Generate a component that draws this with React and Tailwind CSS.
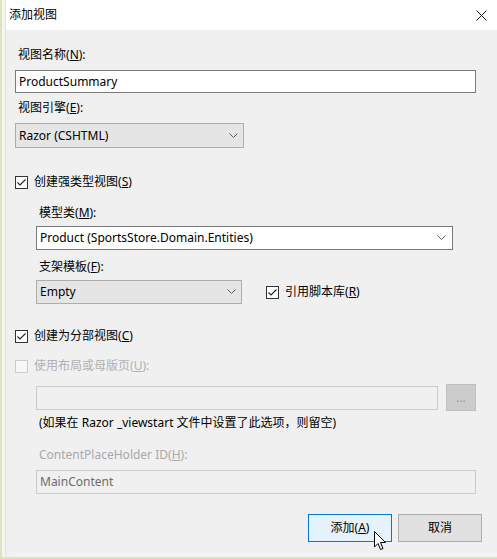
import React from "react"

const font = {
  fontFamily: '"Segoe UI", "Noto Sans", "Noto Sans CJK SC", sans-serif',
}

function Chevron({ color = "#606060" }) {
  return (
    <svg width="9" height="6" viewBox="0 0 9 6" className="shrink-0">
      <path d="M0.5 0.5 L4.5 4.5 L8.5 0.5" fill="none" stroke={color} strokeWidth="1" />
    </svg>
  )
}

function CheckBox({ checked, disabled }) {
  return (
    <div
      className={`flex h-[13px] w-[13px] shrink-0 items-center justify-center border ${
        disabled ? "border-[#cccccc] bg-[#f7f7f7]" : "border-[#333333] bg-white"
      }`}
    >
      {checked && (
        <svg width="11" height="11" viewBox="0 0 11 11">
          <path d="M1.5 5.5 L4 8 L9.5 2.5" fill="none" stroke="#222" strokeWidth="1.1" />
        </svg>
      )}
    </div>
  )
}

function Label({ text, k, rest = "):", className = "" }) {
  return (
    <div className={`h-4 text-[12px] leading-4 ${className}`}>
      {text}(<span className="underline">{k}</span>
      {rest}
    </div>
  )
}

export default function App() {
  return (
    <div
      className="relative flex h-[559px] w-[497px] overflow-hidden border-b-2 border-l-2 border-[#dfe3bf] bg-[#f0f0f0] text-black"
      style={font}
    >
      {/* left strip of window frame */}
      <div className="w-[4px] shrink-0 border-r border-[#e2e2e2] bg-[#f6f6f1]" />

      <div className="flex flex-1 flex-col">
        {/* Title bar */}
        <div className="flex h-[30px] items-center justify-between bg-white pl-[3px] pr-[10px]">
          <span className="text-[12px]">添加视图</span>
          <svg width="11" height="11" viewBox="0 0 11 11">
            <path d="M0.5 0.5 L10.5 10.5 M10.5 0.5 L0.5 10.5" stroke="#111" strokeWidth="1" />
          </svg>
        </div>

        <div className="flex flex-1 flex-col pl-[9px] text-[12px]">
          <Label text="视图名称" k="N" className="ml-[3px] mt-[17px]" />
          <div className="mt-[7px] flex h-[23px] w-[461px] items-center border border-[#7a7a7a] bg-white pl-[3px]">
            ProductSummary
          </div>

          <Label text="视图引擎" k="E" className="ml-[3px] mt-[7px]" />
          <div className="mt-[7px] flex h-[25px] w-[229px] items-center justify-between border border-[#adadad] bg-[#e5e5e5] pl-[3px] pr-[5px]">
            <span>Razor (CSHTML)</span>
            <Chevron />
          </div>

          <div className="mt-[26px] flex h-4 items-center gap-[6px]">
            <CheckBox checked />
            <Label text="创建强类型视图" k="S" rest=")" />
          </div>

          {/* indented model section */}
          <div className="flex flex-col pl-[21px]">
            <Label text="模型类" k="M" className="ml-[3px] mt-[15px]" />
            <div className="mt-[5px] flex h-[24px] w-[417px] items-center justify-between border border-[#7a7a7a] bg-white pl-[3px] pr-[6px]">
              <span>Product (SportsStore.Domain.Entities)</span>
              <Chevron />
            </div>

            <Label text="支架模板" k="F" className="ml-[3px] mt-[9px]" />
            <div className="mt-[5px] flex h-[24px] items-center">
              <div className="flex h-full w-[206px] items-center justify-between border border-[#adadad] bg-[#e5e5e5] pl-[3px] pr-[5px]">
                <span>Empty</span>
                <Chevron />
              </div>
              <div className="ml-[24px] flex items-center gap-[6px]">
                <CheckBox checked />
                <Label text="引用脚本库" k="R" rest=")" />
              </div>
            </div>
          </div>

          <div className="mt-[24px] flex h-4 items-center gap-[6px]">
            <CheckBox checked />
            <Label text="创建为分部视图" k="C" rest=")" />
          </div>

          <div className="mt-[14px] flex h-4 items-center gap-[6px] text-[#b0b0b0]">
            <CheckBox disabled />
            <Label text="使用布局或母版页" k="U" />
          </div>

          <div className="flex flex-col pl-[21px]">
            <div className="mt-[10px] flex h-[27px] items-center">
              <div className="h-[24px] w-[402px] border border-[#cccccc] bg-[#f0f0f0]" />
              <div className="ml-[8px] flex h-[27px] w-[30px] items-center justify-center border border-[#bfbfbf] bg-[#cccccc] text-[#9a9a9a]">
                ...
              </div>
            </div>

            <div className="ml-[3px] mt-[4px] h-4 leading-4">
              (如果在 Razor _viewstart 文件中设置了此选项，则留空)
            </div>

            <Label
              text="ContentPlaceHolder ID"
              k="H"
              className="ml-[3px] mt-[16px] text-[#a9a9a9]"
            />
            <div className="mt-[7px] flex h-[24px] w-[440px] items-center border border-[#cccccc] bg-[#f0f0f0] pl-[3px] text-[#6d6d6d]">
              MainContent
            </div>
          </div>

          <div className="mt-[20px] flex justify-end gap-[6px] pr-[15px]">
            <div className="flex h-[28px] w-[84px] items-center justify-center border border-[#0078d7] bg-[#e5f1fb]">
              添加(<span className="underline">A</span>)
            </div>
            <div className="flex h-[28px] w-[84px] items-center justify-center border border-[#adadad] bg-[#e1e1e1]">
              取消
            </div>
          </div>

          <div className="mt-auto h-[4px] bg-[#f4f4f8]" />
        </div>
      </div>

      {/* mouse pointer */}
      <svg
        width="13"
        height="20"
        viewBox="0 0 13 20"
        className="absolute left-[372px] top-[531px]"
      >
        <path
          d="M0.5 0.5 L0.5 16 L4 12.5 L6.5 18.5 L9 17.5 L6.5 11.5 L11.5 11.5 Z"
          fill="white"
          stroke="black"
          strokeWidth="1"
          strokeLinejoin="round"
        />
      </svg>
    </div>
  )
}
